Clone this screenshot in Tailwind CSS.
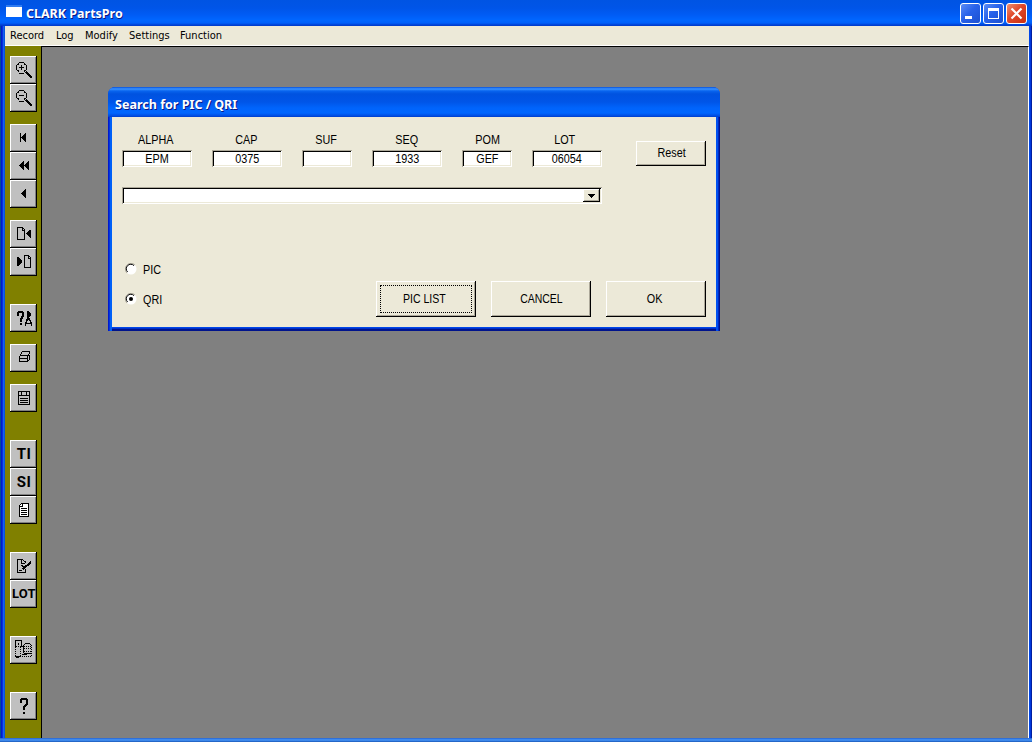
<!DOCTYPE html>
<html lang="en">
<head>
    <meta charset="UTF-8">
    <meta name="viewport" content="width=device-width, initial-scale=1.0">
    <title>CLARK PartsPro</title>
    <script src="https://cdn.jsdelivr.net/npm/@tailwindcss/browser@4"></script>
    <style>
        /* Raised toolbar and dialog buttons */
        .tool {
            width: 27px;
            height: 28px;
            background: #c0c0c0;
            box-shadow: inset -1px -1px #000, inset 1px 1px #fff, inset -2px -2px #808080;
        }
        .tool svg {
            display: block;
            width: 27px;
            height: 28px;
            fill: none;
            stroke: #000;
            shape-rendering: crispEdges;
        }
        .btn {
            background: #ece9d8;
            box-shadow: inset -1px -1px #000, inset 1px 1px #fff, inset -2px -2px #aca899;
        }
        /* Sunken text fields */
        .field {
            height: 17px;
            background: #fff;
            box-shadow: inset 1px 1px #aca899, inset -1px -1px #fff, inset 2px 2px #000, inset -2px -2px #ece9d8;
        }
    </style>
</head>
<body class="w-[1032px] h-[742px] overflow-hidden bg-[#808080] text-black text-[11px] font-['DejaVu_Sans_Condensed','Liberation_Sans',sans-serif]">
    <div class="relative w-full h-full flex flex-col">
        <!-- Title bar -->
        <header class="h-[26px] shrink-0 flex items-center pl-[6px] pr-[5px] bg-[linear-gradient(#0054e3_0px,#0055e8_8px,#005cf5_15px,#0066ff_20px,#0060fa_23px,#0040d4_25px,#003bc8_26px)]">
            <div class="w-[16px] h-[12px] bg-white border-t-2 border-[#2f7bf0] mb-1"></div>
            <h1 class="ml-1 w-[200px] h-[17px] leading-[17px] text-[13px] font-bold text-white whitespace-nowrap font-['Noto_Sans',sans-serif] [text-shadow:1px_1px_#0a1883]"><span class="inline-block origin-left scale-x-[0.96]">CLARK PartsPro</span></h1>
            <div class="ml-auto flex gap-[2px]">
                <button class="w-[21px] h-[21px] rounded-[3px] border border-white bg-[linear-gradient(135deg,#5a8cf5,#2862ea_45%,#1c50d0)]">
                    <svg class="block w-[19px] h-[19px]" viewBox="0 0 19 19"><path fill="#fff" d="M4 12h7v3H4z"/></svg>
                </button>
                <button class="w-[21px] h-[21px] rounded-[3px] border border-white bg-[linear-gradient(135deg,#5a8cf5,#2862ea_45%,#1c50d0)]">
                    <svg class="block w-[19px] h-[19px]" viewBox="0 0 19 19"><path fill="#fff" fill-rule="evenodd" d="M4 4h11v11H4zM5 7v7h9V7z"/></svg>
                </button>
                <button class="w-[21px] h-[21px] rounded-[3px] border border-white bg-[linear-gradient(135deg,#f09070,#e0482a_45%,#c83010)]">
                    <svg class="block w-[19px] h-[19px]" viewBox="0 0 19 19"><path stroke="#fff" stroke-width="2.2" d="M4.5 4.5l10 10M14.5 4.5l-10 10"/></svg>
                </button>
            </div>
        </header>

        <div class="flex-1 min-h-0 flex">
            <!-- Left window edge -->
            <div class="w-[5px] shrink-0 bg-[linear-gradient(90deg,#004a9c_1px,#0019cf_1px,#0019cf_2px,#0831d9_2px,#0831d9_3px,#1660f0_3px,#1660f0_4px,#0855dd_4px)]"></div>
            <div class="w-[1024px] flex flex-col">
                <nav class="h-[20px] shrink-0 flex bg-[#ece9d8] border-b border-white leading-[20px] pl-[5px] whitespace-nowrap">
                    <a class="w-[46px]">Record</a>
                    <a class="w-[29px]">Log</a>
                    <a class="w-[44px]">Modify</a>
                    <a class="w-[51px]">Settings</a>
                    <a>Function</a>
                </nav>
                <div class="flex-1 min-h-0 flex">
                    <!-- Toolbar -->
                    <aside class="w-[37px] shrink-0 bg-[#808000] border-r border-black pl-[5px] pt-[10px]">
                        <div class="tool"><svg viewBox="0 0 27 28"><path d="M9 6.5h5M9 17.5h5M6.5 9v5M16.5 9v5M7 8.5h2M8.5 7v2M14 8.5h2M14.5 7v2M7 14.5h2M8.5 14v2M14 14.5h2M14.5 14v2M9 11.5h5M11.500 9v5"/><path stroke-width="2" d="M16 16l6 6"/></svg></div>
                        <div class="tool"><svg viewBox="0 0 27 28"><path d="M9 6.5h5M9 17.5h5M6.5 9v5M16.5 9v5M7 8.5h2M8.5 7v2M14 8.5h2M14.5 7v2M7 14.5h2M8.5 14v2M14 14.5h2M14.5 14v2M9 11.5h5"/><path stroke-width="2" d="M16 16l6 6"/></svg></div>
                        <div class="tool mt-[12px]"><svg viewBox="0 0 27 28"><path d="M10.5 9v9"/><path fill="#000" stroke="none" d="M16 9v9h-1l-4-4v-1l4-4z"/></svg></div>
                        <div class="tool"><svg viewBox="0 0 27 28"><path fill="#000" stroke="none" d="M14 9v9h-1l-4-4v-1l4-4zM19 9v9h-1l-4-4v-1l4-4z"/></svg></div>
                        <div class="tool"><svg viewBox="0 0 27 28"><path fill="#000" stroke="none" d="M16 9v9h-1l-4-4v-1l4-4z"/></svg></div>
                        <div class="tool mt-[12px]"><svg viewBox="0 0 27 28"><path d="M7.5 7.5h5l2 2v10h-7zM12.5 7.5v2.5h2"/><path fill="#000" stroke="none" d="M21 10v8h-1l-4-4v-1l4-3z"/></svg></div>
                        <div class="tool"><svg viewBox="0 0 27 28"><path d="M14.5 7.5h4l2 2v10h-6zM18.5 7.5v2.5h2"/><path fill="#000" stroke="none" d="M7 9v9h1l4-4v-1l-4-4z"/></svg></div>
                        <div class="tool mt-[28px]"><svg viewBox="0 0 27 28"><path stroke-width="2" d="M8 12V9l1-1h3l1 1v3l-2 3v3M11 19v2"/><path fill="#000" stroke="none" d="M17 7h1l3 3v1l-3 3h-1z"/><path stroke-width="1.5" d="M15.500 22v-2l2-5h2l2 5v2M16 19.500h5"/></svg></div>
                        <div class="tool mt-[12px]"><svg viewBox="0 0 27 28"><path d="M12 7.5h8M11.5 8v2M10.5 10v2M19.5 8v2M18.5 10v2M10 11.5h8M9.500 12v6M10 17.5h7M17.5 12v6M10 14.5h8M19.5 11v5M18 16.5h1"/></svg></div>
                        <div class="tool mt-[12px]"><svg viewBox="0 0 27 28"><path d="M8.5 7.5h11v13h-11zM8 11.5h12M11.5 7v4M16.5 7v4M10 14.5h8M10 16.5h8M10 18.5h8"/></svg></div>
                        <div class="tool mt-[28px] text-center leading-[28px] text-[15px] font-bold font-['Roboto',sans-serif]"><span class="inline-block pl-px tracking-[0.5px]">TI</span></div>
                        <div class="tool text-center leading-[28px] text-[15px] font-bold font-['Roboto',sans-serif]"><span class="inline-block pl-px tracking-[0.5px]">SI</span></div>
                        <div class="tool"><svg viewBox="0 0 27 28"><path fill="#fff" d="M11.5 7.5h7v13h-9v-11z"/><path d="M12.5 8v2.5h-3M11 12.5h6M11 14.5h6M11 16.5h6M11 18.5h6"/></svg></div>
                        <div class="tool mt-[28px]"><svg viewBox="0 0 27 28"><path d="M15.5 11v-1l-3-2.5h-5v13h8v-4M11.5 8v3.5h3M9 18.5h3"/><path stroke-width="2" d="M21 10l-8 7"/><path d="M11 13.500h2M12 14.500h2M12 16.500h2"/></svg></div>
                        <div class="tool leading-[28px] text-[13px] font-bold font-['Roboto',sans-serif]"><span class="block pl-[2px] tracking-[0.2px] whitespace-nowrap">LOT</span></div>
                        <div class="tool mt-[28px]"><svg viewBox="0 0 27 28"><path d="M5 4.5h7M5.5 5v6M11.5 5v6M8.5 7v2M15 7.5h5M14 8.5h1M20 8.5h1M13.5 9v8M14 17.5h7M5 20.5h6M12 18.5h5M6 21.5h3"/><path stroke-dasharray="1 1" d="M5.5 11v9M10.5 11v9M6 10.5h16M14 12.5h8M14 15.5h8M12 20.5h10M21.5 9v11"/></svg></div>
                        <div class="tool mt-[28px]"><svg viewBox="0 0 27 28"><path stroke-width="2" d="M11 11V8l1-1h4l1 1v4l-3 3v3M14 20v2"/></svg></div>
                    </aside>
                    <!-- Workspace -->
                    <main class="flex-1 border-t border-r border-t-black border-r-white bg-[#808080]"></main>
                </div>
            </div>
            <!-- Right window edge -->
            <div class="w-[3px] bg-[linear-gradient(90deg,#0046e8_1px,#0038dc_1px,#0038dc_2px,#001ea0_2px)]"></div>
        </div>
        <footer class="h-[4px] shrink-0 bg-[linear-gradient(#2f6fd8_1px,#3f8cf0_1px,#3c86e8_3px,#2467c8_3px)]"></footer>

        <!-- Search dialog -->
        <section class="absolute left-[108px] top-[87px] w-[612px] h-[244px] flex flex-col rounded-t-[7px] overflow-hidden bg-[linear-gradient(#0046e8_241px,#0030c8_241px,#0030c8_242px,#00138c_242px)] font-['Liberation_Sans',sans-serif]">
            <h2 class="h-[30px] shrink-0 pl-[7px] leading-[34px] text-[13px] font-bold text-white whitespace-nowrap font-['Noto_Sans',sans-serif] [text-shadow:1px_1px_#0a1883] bg-[linear-gradient(#0850d8_0px,#3a93ff_2px,#0864ee_4px,#0052e0_7px,#0055e8_15px,#0064fc_21px,#0066ff_26px,#004be0_29px,#003cc8_30px)]"><span class="inline-block origin-left scale-x-[0.965]">Search for PIC / QRI</span></h2>
            <div class="flex-1 flex">
                <div class="w-[4px] bg-[linear-gradient(90deg,#0019cf_1px,#0034dc_1px,#0034dc_2px,#0060f8_2px)]"></div>
                <div class="w-[604px] h-[210px] bg-[#ece9d8] pl-[10px] pr-[9px] flex flex-col">
                    <div class="flex pt-[16px]">
                        <div class="w-[90px]"><label class="block w-[67px] text-center leading-[14px] h-[17px] text-[12px]"><span class="inline-block scale-x-90">ALPHA</span></label><div class="field w-[70px] text-center leading-[18px] text-[12px]"><span class="inline-block scale-x-90">EPM</span></div></div>
                        <div class="w-[90px]"><label class="block w-[68px] text-center leading-[14px] h-[17px] text-[12px]"><span class="inline-block scale-x-90">CAP</span></label><div class="field w-[70px] text-center leading-[18px] text-[12px]"><span class="inline-block scale-x-90">0375</span></div></div>
                        <div class="w-[70px]"><label class="block w-[47px] text-center leading-[14px] h-[17px] text-[12px]"><span class="inline-block scale-x-90">SUF</span></label><div class="field w-[50px]"></div></div>
                        <div class="w-[90px]"><label class="block w-[70px] text-center leading-[14px] h-[17px] text-[12px]"><span class="inline-block scale-x-90">SEQ</span></label><div class="field w-[70px] text-center leading-[18px] text-[12px]"><span class="inline-block scale-x-90">1933</span></div></div>
                        <div class="w-[70px]"><label class="block w-[51px] text-center leading-[14px] h-[17px] text-[12px]"><span class="inline-block scale-x-90">POM</span></label><div class="field w-[50px] text-center leading-[18px] text-[12px]"><span class="inline-block scale-x-90">GEF</span></div></div>
                        <div class="w-[104px]"><label class="block w-[66px] text-center leading-[14px] h-[17px] text-[12px]"><span class="inline-block scale-x-90">LOT</span></label><div class="field w-[70px] text-center leading-[18px] text-[12px]"><span class="inline-block scale-x-90">06054</span></div></div>
                        <button class="btn w-[70px] h-[25px] mt-[8px] pl-px text-[12px] leading-[25px]"><span class="inline-block scale-x-90">Reset</span></button>
                    </div>
                    <div class="field w-[480px] mt-[20px] flex justify-end pt-[2px] pr-[2px]">
                        <div class="btn w-[17px] h-[13px] flex justify-center"><svg class="w-[7px] h-[4px] mt-[5px]" viewBox="0 0 7 4" shape-rendering="crispEdges"><path d="M0 0h7v1H6v1H5v1H4v1H3V3H2V2H1V1H0z"/></svg></div>
                    </div>
                    <div class="flex mt-[58px]">
                        <div class="w-[254px] pl-[3px] text-[12px]">
                            <div class="flex h-[30px] items-start leading-[16px]">
                                <svg class="w-[12px] h-[12px] mt-[1px]" viewBox="0 0 12 12"><circle cx="6" cy="6" r="5.5" fill="#fff"/><path fill="none" stroke="#aca899" d="M2 10A5.5 5.5 0 0 1 10 2"/><path fill="none" stroke="#000" d="M2.6 9A4.5 4.5 0 0 1 9 2.6"/></svg>
                                <span class="ml-[6px] origin-left scale-x-90">PIC</span>
                            </div>
                            <div class="flex items-start leading-[16px]">
                                <svg class="w-[12px] h-[12px] mt-[1px]" viewBox="0 0 12 12"><circle cx="6" cy="6" r="5.5" fill="#fff"/><path fill="none" stroke="#aca899" d="M2 10A5.5 5.5 0 0 1 10 2"/><path fill="none" stroke="#000" d="M2.6 9A4.5 4.5 0 0 1 9 2.6"/><circle cx="6" cy="6" r="2"/></svg>
                                <span class="ml-[6px] origin-left scale-x-90">QRI</span>
                            </div>
                        </div>
                        <div class="flex gap-[15px] mt-[19px] text-[12px]">
                            <button class="btn w-[100px] h-[36px] p-[4px]"><span class="flex h-full items-center justify-center border border-dotted border-black"><span class="scale-x-[0.88] -ml-[3px]">PIC LIST</span></span></button>
                            <button class="btn w-[100px] h-[36px]"><span class="inline-block scale-x-[0.87]">CANCEL</span></button>
                            <button class="btn w-[100px] h-[36px] pr-[2px]"><span class="inline-block scale-x-90">OK</span></button>
                        </div>
                    </div>
                </div>
                <div class="w-[4px] bg-[linear-gradient(90deg,#0050f0_2px,#0028c0_2px,#0028c0_3px,#00138c_3px)]"></div>
            </div>
        </section>
    </div>
</body>
</html>
